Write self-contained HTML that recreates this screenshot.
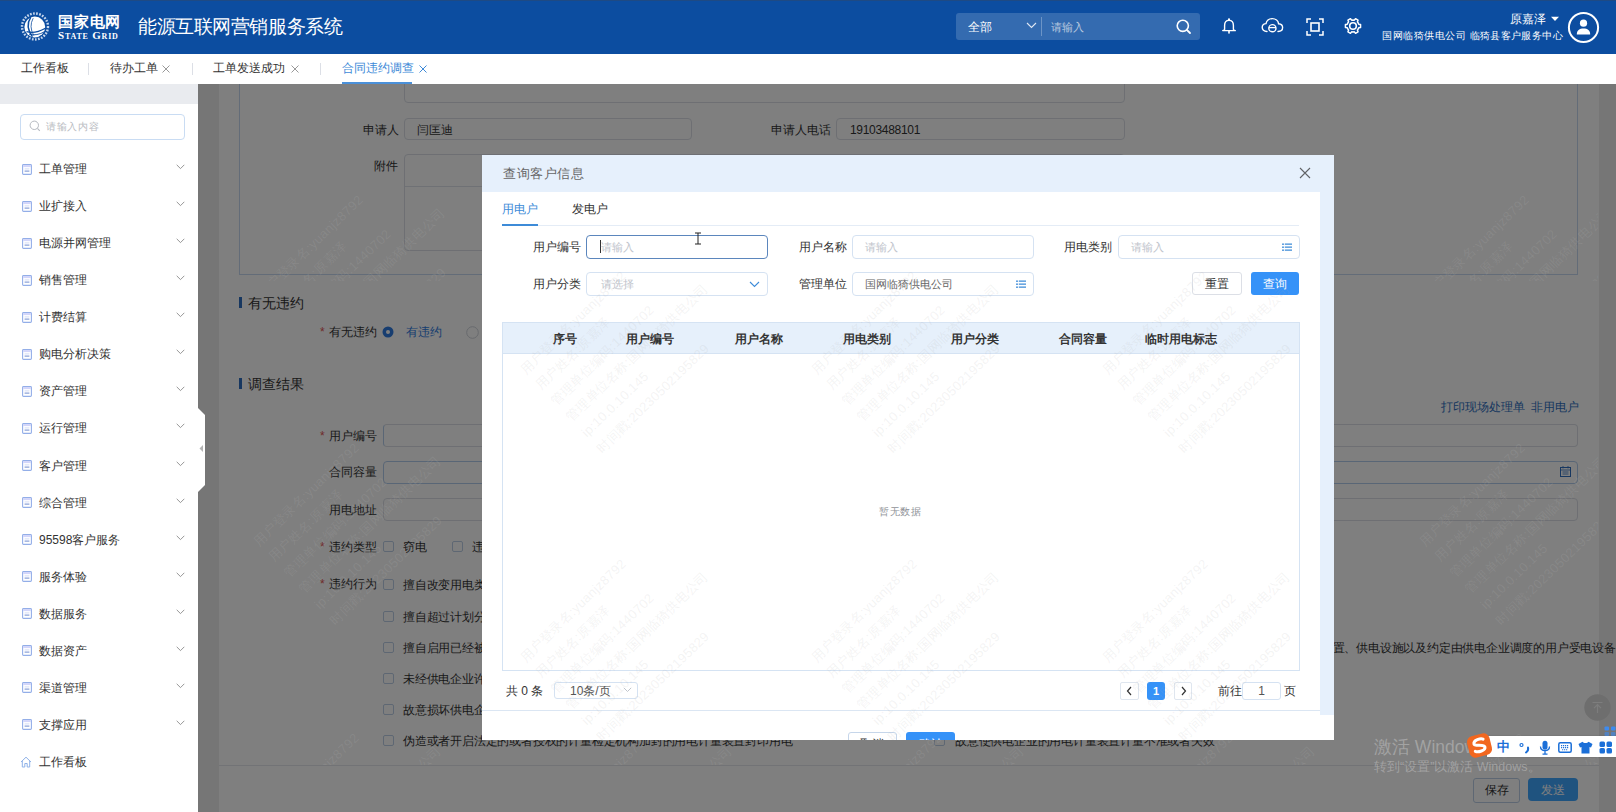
<!DOCTYPE html>
<html><head><meta charset="utf-8">
<style>
*{box-sizing:border-box;margin:0;padding:0}
html,body{width:1616px;height:812px;overflow:hidden;background:#fff;font-family:"Liberation Sans",sans-serif;position:relative}
.a{position:absolute}
.t{position:absolute;white-space:nowrap;line-height:20px}
#hdr{left:0;top:0;width:1616px;height:54px;background:#0c4da0}
#tabs{left:0;top:54px;width:1616px;height:30px;background:#fff}
#side{left:0;top:84px;width:198px;height:728px;background:#fff}
#content{left:198px;top:84px;width:1418px;height:728px;background:#ededed;overflow:hidden}
#overlay{left:198px;top:84px;width:1418px;height:728px;background:rgba(0,0,0,0.5)}
#modal{left:482px;top:155px;width:852px;height:585px;background:#fff;overflow:hidden}
</style></head><body>
<div id="hdr" class="a">
<div class="a" style="left:0px;top:0px;width:1616px;height:1px;background:#1e4a84"></div>
<svg class="a" style="left:20px;top:11px;" width="31" height="31" viewBox="0 0 31 31"><circle cx="15" cy="15.5" r="13" fill="none" stroke="#e6eefa" stroke-width="2.4" stroke-dasharray="1.7 1.4" opacity="0.85"/>
<circle cx="14.8" cy="16" r="10.4" fill="#fff"/>
<path d="M10.8 6.2 Q4.8 15.5 12.4 25.8" fill="none" stroke="#0c4da0" stroke-width="1.5"/>
<path d="M13.2 7.2 Q8.6 15.5 13.8 24.6" fill="none" stroke="#0c4da0" stroke-width="0.8"/>
<path d="M6.5 20.6 Q15 23.2 25.4 17.2" fill="none" stroke="#0c4da0" stroke-width="1.3"/>
<path d="M9 23.2 Q17 25.2 24.6 20.6" fill="none" stroke="#0c4da0" stroke-width="0.9"/></svg>
<div class="t" style="left:58px;top:12.0px;line-height:20px;font-size:15px;color:#fff;font-weight:bold;letter-spacing:0.8px">国家电网</div>
<div class="t" style="left:58px;top:27.5px;line-height:14px;font-size:11px;color:#fff;font-family:'Liberation Serif',serif;font-weight:bold;font-variant:small-caps;letter-spacing:0.8px">State Grid</div>
<div class="t" style="left:138px;top:14.5px;line-height:24px;font-size:19px;color:#fff;letter-spacing:-0.42px">能源互联网营销服务系统</div>
<div class="a" style="left:956px;top:13px;width:244px;height:27px;background:rgba(255,255,255,0.17);border-radius:3px"></div>
<div class="t" style="left:968px;top:17.0px;line-height:20px;font-size:12px;color:#fff;">全部</div>
<svg class="a" style="left:1026px;top:22px;" width="11" height="7" viewBox="0 0 11 7"><path d="M1 1 L5.5 5.5 L10 1" fill="none" stroke="#dfe7f3" stroke-width="1.1"/></svg>
<div class="a" style="left:1041px;top:17px;width:1px;height:19px;background:rgba(255,255,255,0.28)"></div>
<div class="t" style="left:1051px;top:17.0px;line-height:20px;font-size:11px;color:#b8c8df;">请输入</div>
<svg class="a" style="left:1175px;top:18px;" width="17" height="17" viewBox="0 0 17 17"><circle cx="7.8" cy="7.8" r="5.6" fill="none" stroke="#fff" stroke-width="1.6"/><path d="M11.8 11.8 L15 15" stroke="#fff" stroke-width="1.8" stroke-linecap="round"/></svg>
<svg class="a" style="left:1220px;top:17px;" width="18" height="18" viewBox="0 0 18 18"><path d="M4.6 12.6 V8.4 C4.6 5.4 6.5 3.4 9 3.4 C11.5 3.4 13.4 5.4 13.4 8.4 V12.6 C13.4 13 14.5 13.4 15.3 13.6 L2.7 13.6 C3.5 13.4 4.6 13 4.6 12.6 Z" fill="none" stroke="#fff" stroke-width="1.4" stroke-linejoin="round"/><circle cx="9" cy="2.4" r="1.1" fill="#fff"/><path d="M9 14.5 V16" stroke="#fff" stroke-width="1.6" stroke-linecap="round"/></svg>
<svg class="a" style="left:1261px;top:17px;" width="23" height="17" viewBox="0 0 23 17"><path d="M6 14.5 C2.8 14.5 1.2 12.5 1.2 10.3 C1.2 8 3 6.6 5 6.6 C5.6 3.6 8 1.6 11.3 1.6 C14.6 1.6 17.2 3.8 17.6 6.8 C19.8 7 21.6 8.5 21.6 10.6 C21.6 12.8 20 14.5 17 14.5" fill="none" stroke="#fff" stroke-width="1.4" stroke-linecap="round"/><circle cx="11.4" cy="11.2" r="3.6" fill="none" stroke="#fff" stroke-width="1.4"/><path d="M7.8 10.6 L15 10.6" stroke="#fff" stroke-width="1.3"/></svg>
<svg class="a" style="left:1306px;top:18px;" width="18" height="18" viewBox="0 0 18 18"><path d="M1 5 L1 1 L5 1 M13 1 L17 1 L17 5 M17 13 L17 17 L13 17 M5 17 L1 17 L1 13" fill="none" stroke="#fff" stroke-width="1.5"/><rect x="5" y="5" width="8" height="8" fill="none" stroke="#fff" stroke-width="1.6"/></svg>
<svg class="a" style="left:1344px;top:17px;" width="18" height="18" viewBox="0 0 18 18"><path d="M14.20 6.00 L14.74 7.25 L16.56 7.53 L16.56 10.47 L14.74 10.75 L14.20 12.00 L13.39 13.09 L14.05 14.81 L11.51 16.28 L10.35 14.85 L9.00 15.00 L7.65 14.85 L6.49 16.28 L3.95 14.81 L4.61 13.09 L3.80 12.00 L3.26 10.75 L1.44 10.47 L1.44 7.53 L3.26 7.25 L3.80 6.00 L4.61 4.91 L3.95 3.19 L6.49 1.72 L7.65 3.15 L9.00 3.00 L10.35 3.15 L11.51 1.72 L14.05 3.19 L13.39 4.91 Z" fill="none" stroke="#fff" stroke-width="1.5" stroke-linejoin="round"/><circle cx="9" cy="9" r="3.3" fill="none" stroke="#fff" stroke-width="1.6"/></svg>
<div class="t" style="left:1510px;top:8.5px;line-height:20px;font-size:12px;color:#fff;">原嘉泽</div>
<svg class="a" style="left:1550px;top:16px;" width="10" height="6" viewBox="0 0 10 6"><path d="M1 0.8 L9 0.8 L5 5 Z" fill="#fff"/></svg>
<div class="t" style="left:1382px;top:26.0px;line-height:20px;font-size:10px;color:#fff;letter-spacing:0.57px">国网临猗供电公司</div>
<div class="t" style="left:1469.5px;top:26.0px;line-height:20px;font-size:10px;color:#fff;letter-spacing:0.4px">临猗县客户服务中心</div>
<svg class="a" style="left:1567px;top:11px;" width="33" height="33" viewBox="0 0 33 33"><circle cx="16.5" cy="16.5" r="14.6" fill="none" stroke="#fff" stroke-width="2"/><circle cx="16.5" cy="12.2" r="3.6" fill="#fff"/><path d="M9.8 23.5 C9.8 19.2 12.5 17.4 16.5 17.4 C20.5 17.4 23.2 19.2 23.2 23.5 Z" fill="#fff"/></svg>
</div>
<div id="tabs" class="a">
<div class="t" style="left:21px;top:4.0px;line-height:20px;font-size:12px;color:#333;">工作看板</div>
<div class="a" style="left:88px;top:9px;width:1px;height:12px;background:#dcdfe6"></div>
<div class="t" style="left:109.5px;top:4.0px;line-height:20px;font-size:12px;color:#333;">待办工单</div>
<svg class="a" style="left:161px;top:10px;" width="10" height="10" viewBox="0 0 10 10"><path d="M1.5 1.5 L8.5 8.5 M8.5 1.5 L1.5 8.5" stroke="#999" stroke-width="1"/></svg>
<div class="a" style="left:192px;top:9px;width:1px;height:12px;background:#dcdfe6"></div>
<div class="t" style="left:213px;top:4.0px;line-height:20px;font-size:12px;color:#333;">工单发送成功</div>
<svg class="a" style="left:290px;top:10px;" width="10" height="10" viewBox="0 0 10 10"><path d="M1.5 1.5 L8.5 8.5 M8.5 1.5 L1.5 8.5" stroke="#999" stroke-width="1"/></svg>
<div class="a" style="left:320px;top:9px;width:1px;height:12px;background:#dcdfe6"></div>
<div class="t" style="left:342px;top:4.0px;line-height:20px;font-size:12px;color:#3e8ad8;">合同违约调查</div>
<svg class="a" style="left:418px;top:10px;" width="10" height="10" viewBox="0 0 10 10"><path d="M1.5 1.5 L8.5 8.5 M8.5 1.5 L1.5 8.5" stroke="#3e8ad8" stroke-width="1"/></svg>
<div class="a" style="left:342px;top:28px;width:70px;height:2px;background:#4a90d9"></div>
</div>
<div id="side" class="a">
<div class="a" style="left:0px;top:0px;width:198px;height:20px;background:#e9ebef"></div>
<div class="a" style="left:20px;top:30px;width:165px;height:26px;border:1px solid #c9dcf3;border-radius:4px;background:#fff"></div>
<svg class="a" style="left:29px;top:36px;" width="12" height="12" viewBox="0 0 12 12"><circle cx="5.3" cy="5.3" r="4.2" fill="none" stroke="#b5b9c0" stroke-width="1"/><path d="M8.4 8.4 L10.8 10.8" stroke="#b5b9c0" stroke-width="1.1"/></svg>
<div class="t" style="left:46px;top:32.5px;line-height:20px;font-size:10px;color:#b9bcc2;letter-spacing:0.7px">请输入内容</div>
<svg class="a" style="left:21.5px;top:79.5px;" width="10" height="11" viewBox="0 0 10 11"><rect x="0.6" y="0.6" width="8.8" height="9.8" rx="0.9" fill="#fff" stroke="#93aee8" stroke-width="1.1"/><rect x="1.2" y="1.1" width="7.6" height="2" fill="#d2d5fa"/><path d="M2.6 4.9 H7.4" stroke="#c9d3f2" stroke-width="0.8"/><path d="M2.6 7.1 H7.4" stroke="#6f8bcf" stroke-width="1"/></svg>
<div class="t" style="left:39px;top:75.0px;line-height:20px;font-size:12px;color:#333;">工单管理</div>
<svg class="a" style="left:176px;top:80px;" width="9" height="6" viewBox="0 0 9 6"><path d="M0.7 0.8 L4.5 4.6 L8.3 0.8" fill="none" stroke="#8a8a8a" stroke-width="0.9"/></svg>
<svg class="a" style="left:21.5px;top:116.6px;" width="10" height="11" viewBox="0 0 10 11"><rect x="0.6" y="0.6" width="8.8" height="9.8" rx="0.9" fill="#fff" stroke="#93aee8" stroke-width="1.1"/><rect x="1.2" y="1.1" width="7.6" height="2" fill="#d2d5fa"/><path d="M2.6 4.9 H7.4" stroke="#c9d3f2" stroke-width="0.8"/><path d="M2.6 7.1 H7.4" stroke="#6f8bcf" stroke-width="1"/></svg>
<div class="t" style="left:39px;top:112.1px;line-height:20px;font-size:12px;color:#333;">业扩接入</div>
<svg class="a" style="left:176px;top:117.1px;" width="9" height="6" viewBox="0 0 9 6"><path d="M0.7 0.8 L4.5 4.6 L8.3 0.8" fill="none" stroke="#8a8a8a" stroke-width="0.9"/></svg>
<svg class="a" style="left:21.5px;top:153.6px;" width="10" height="11" viewBox="0 0 10 11"><rect x="0.6" y="0.6" width="8.8" height="9.8" rx="0.9" fill="#fff" stroke="#93aee8" stroke-width="1.1"/><rect x="1.2" y="1.1" width="7.6" height="2" fill="#d2d5fa"/><path d="M2.6 4.9 H7.4" stroke="#c9d3f2" stroke-width="0.8"/><path d="M2.6 7.1 H7.4" stroke="#6f8bcf" stroke-width="1"/></svg>
<div class="t" style="left:39px;top:149.1px;line-height:20px;font-size:12px;color:#333;">电源并网管理</div>
<svg class="a" style="left:176px;top:154.1px;" width="9" height="6" viewBox="0 0 9 6"><path d="M0.7 0.8 L4.5 4.6 L8.3 0.8" fill="none" stroke="#8a8a8a" stroke-width="0.9"/></svg>
<svg class="a" style="left:21.5px;top:190.7px;" width="10" height="11" viewBox="0 0 10 11"><rect x="0.6" y="0.6" width="8.8" height="9.8" rx="0.9" fill="#fff" stroke="#93aee8" stroke-width="1.1"/><rect x="1.2" y="1.1" width="7.6" height="2" fill="#d2d5fa"/><path d="M2.6 4.9 H7.4" stroke="#c9d3f2" stroke-width="0.8"/><path d="M2.6 7.1 H7.4" stroke="#6f8bcf" stroke-width="1"/></svg>
<div class="t" style="left:39px;top:186.2px;line-height:20px;font-size:12px;color:#333;">销售管理</div>
<svg class="a" style="left:176px;top:191.2px;" width="9" height="6" viewBox="0 0 9 6"><path d="M0.7 0.8 L4.5 4.6 L8.3 0.8" fill="none" stroke="#8a8a8a" stroke-width="0.9"/></svg>
<svg class="a" style="left:21.5px;top:227.7px;" width="10" height="11" viewBox="0 0 10 11"><rect x="0.6" y="0.6" width="8.8" height="9.8" rx="0.9" fill="#fff" stroke="#93aee8" stroke-width="1.1"/><rect x="1.2" y="1.1" width="7.6" height="2" fill="#d2d5fa"/><path d="M2.6 4.9 H7.4" stroke="#c9d3f2" stroke-width="0.8"/><path d="M2.6 7.1 H7.4" stroke="#6f8bcf" stroke-width="1"/></svg>
<div class="t" style="left:39px;top:223.2px;line-height:20px;font-size:12px;color:#333;">计费结算</div>
<svg class="a" style="left:176px;top:228.2px;" width="9" height="6" viewBox="0 0 9 6"><path d="M0.7 0.8 L4.5 4.6 L8.3 0.8" fill="none" stroke="#8a8a8a" stroke-width="0.9"/></svg>
<svg class="a" style="left:21.5px;top:264.8px;" width="10" height="11" viewBox="0 0 10 11"><rect x="0.6" y="0.6" width="8.8" height="9.8" rx="0.9" fill="#fff" stroke="#93aee8" stroke-width="1.1"/><rect x="1.2" y="1.1" width="7.6" height="2" fill="#d2d5fa"/><path d="M2.6 4.9 H7.4" stroke="#c9d3f2" stroke-width="0.8"/><path d="M2.6 7.1 H7.4" stroke="#6f8bcf" stroke-width="1"/></svg>
<div class="t" style="left:39px;top:260.3px;line-height:20px;font-size:12px;color:#333;">购电分析决策</div>
<svg class="a" style="left:176px;top:265.3px;" width="9" height="6" viewBox="0 0 9 6"><path d="M0.7 0.8 L4.5 4.6 L8.3 0.8" fill="none" stroke="#8a8a8a" stroke-width="0.9"/></svg>
<svg class="a" style="left:21.5px;top:301.9px;" width="10" height="11" viewBox="0 0 10 11"><rect x="0.6" y="0.6" width="8.8" height="9.8" rx="0.9" fill="#fff" stroke="#93aee8" stroke-width="1.1"/><rect x="1.2" y="1.1" width="7.6" height="2" fill="#d2d5fa"/><path d="M2.6 4.9 H7.4" stroke="#c9d3f2" stroke-width="0.8"/><path d="M2.6 7.1 H7.4" stroke="#6f8bcf" stroke-width="1"/></svg>
<div class="t" style="left:39px;top:297.4px;line-height:20px;font-size:12px;color:#333;">资产管理</div>
<svg class="a" style="left:176px;top:302.4px;" width="9" height="6" viewBox="0 0 9 6"><path d="M0.7 0.8 L4.5 4.6 L8.3 0.8" fill="none" stroke="#8a8a8a" stroke-width="0.9"/></svg>
<svg class="a" style="left:21.5px;top:338.9px;" width="10" height="11" viewBox="0 0 10 11"><rect x="0.6" y="0.6" width="8.8" height="9.8" rx="0.9" fill="#fff" stroke="#93aee8" stroke-width="1.1"/><rect x="1.2" y="1.1" width="7.6" height="2" fill="#d2d5fa"/><path d="M2.6 4.9 H7.4" stroke="#c9d3f2" stroke-width="0.8"/><path d="M2.6 7.1 H7.4" stroke="#6f8bcf" stroke-width="1"/></svg>
<div class="t" style="left:39px;top:334.4px;line-height:20px;font-size:12px;color:#333;">运行管理</div>
<svg class="a" style="left:176px;top:339.4px;" width="9" height="6" viewBox="0 0 9 6"><path d="M0.7 0.8 L4.5 4.6 L8.3 0.8" fill="none" stroke="#8a8a8a" stroke-width="0.9"/></svg>
<svg class="a" style="left:21.5px;top:376px;" width="10" height="11" viewBox="0 0 10 11"><rect x="0.6" y="0.6" width="8.8" height="9.8" rx="0.9" fill="#fff" stroke="#93aee8" stroke-width="1.1"/><rect x="1.2" y="1.1" width="7.6" height="2" fill="#d2d5fa"/><path d="M2.6 4.9 H7.4" stroke="#c9d3f2" stroke-width="0.8"/><path d="M2.6 7.1 H7.4" stroke="#6f8bcf" stroke-width="1"/></svg>
<div class="t" style="left:39px;top:371.5px;line-height:20px;font-size:12px;color:#333;">客户管理</div>
<svg class="a" style="left:176px;top:376.5px;" width="9" height="6" viewBox="0 0 9 6"><path d="M0.7 0.8 L4.5 4.6 L8.3 0.8" fill="none" stroke="#8a8a8a" stroke-width="0.9"/></svg>
<svg class="a" style="left:21.5px;top:413px;" width="10" height="11" viewBox="0 0 10 11"><rect x="0.6" y="0.6" width="8.8" height="9.8" rx="0.9" fill="#fff" stroke="#93aee8" stroke-width="1.1"/><rect x="1.2" y="1.1" width="7.6" height="2" fill="#d2d5fa"/><path d="M2.6 4.9 H7.4" stroke="#c9d3f2" stroke-width="0.8"/><path d="M2.6 7.1 H7.4" stroke="#6f8bcf" stroke-width="1"/></svg>
<div class="t" style="left:39px;top:408.5px;line-height:20px;font-size:12px;color:#333;">综合管理</div>
<svg class="a" style="left:176px;top:413.5px;" width="9" height="6" viewBox="0 0 9 6"><path d="M0.7 0.8 L4.5 4.6 L8.3 0.8" fill="none" stroke="#8a8a8a" stroke-width="0.9"/></svg>
<svg class="a" style="left:21.5px;top:450.1px;" width="10" height="11" viewBox="0 0 10 11"><rect x="0.6" y="0.6" width="8.8" height="9.8" rx="0.9" fill="#fff" stroke="#93aee8" stroke-width="1.1"/><rect x="1.2" y="1.1" width="7.6" height="2" fill="#d2d5fa"/><path d="M2.6 4.9 H7.4" stroke="#c9d3f2" stroke-width="0.8"/><path d="M2.6 7.1 H7.4" stroke="#6f8bcf" stroke-width="1"/></svg>
<div class="t" style="left:39px;top:445.6px;line-height:20px;font-size:12px;color:#333;">95598客户服务</div>
<svg class="a" style="left:176px;top:450.6px;" width="9" height="6" viewBox="0 0 9 6"><path d="M0.7 0.8 L4.5 4.6 L8.3 0.8" fill="none" stroke="#8a8a8a" stroke-width="0.9"/></svg>
<svg class="a" style="left:21.5px;top:487.2px;" width="10" height="11" viewBox="0 0 10 11"><rect x="0.6" y="0.6" width="8.8" height="9.8" rx="0.9" fill="#fff" stroke="#93aee8" stroke-width="1.1"/><rect x="1.2" y="1.1" width="7.6" height="2" fill="#d2d5fa"/><path d="M2.6 4.9 H7.4" stroke="#c9d3f2" stroke-width="0.8"/><path d="M2.6 7.1 H7.4" stroke="#6f8bcf" stroke-width="1"/></svg>
<div class="t" style="left:39px;top:482.7px;line-height:20px;font-size:12px;color:#333;">服务体验</div>
<svg class="a" style="left:176px;top:487.7px;" width="9" height="6" viewBox="0 0 9 6"><path d="M0.7 0.8 L4.5 4.6 L8.3 0.8" fill="none" stroke="#8a8a8a" stroke-width="0.9"/></svg>
<svg class="a" style="left:21.5px;top:524.2px;" width="10" height="11" viewBox="0 0 10 11"><rect x="0.6" y="0.6" width="8.8" height="9.8" rx="0.9" fill="#fff" stroke="#93aee8" stroke-width="1.1"/><rect x="1.2" y="1.1" width="7.6" height="2" fill="#d2d5fa"/><path d="M2.6 4.9 H7.4" stroke="#c9d3f2" stroke-width="0.8"/><path d="M2.6 7.1 H7.4" stroke="#6f8bcf" stroke-width="1"/></svg>
<div class="t" style="left:39px;top:519.7px;line-height:20px;font-size:12px;color:#333;">数据服务</div>
<svg class="a" style="left:176px;top:524.7px;" width="9" height="6" viewBox="0 0 9 6"><path d="M0.7 0.8 L4.5 4.6 L8.3 0.8" fill="none" stroke="#8a8a8a" stroke-width="0.9"/></svg>
<svg class="a" style="left:21.5px;top:561.3px;" width="10" height="11" viewBox="0 0 10 11"><rect x="0.6" y="0.6" width="8.8" height="9.8" rx="0.9" fill="#fff" stroke="#93aee8" stroke-width="1.1"/><rect x="1.2" y="1.1" width="7.6" height="2" fill="#d2d5fa"/><path d="M2.6 4.9 H7.4" stroke="#c9d3f2" stroke-width="0.8"/><path d="M2.6 7.1 H7.4" stroke="#6f8bcf" stroke-width="1"/></svg>
<div class="t" style="left:39px;top:556.8px;line-height:20px;font-size:12px;color:#333;">数据资产</div>
<svg class="a" style="left:176px;top:561.8px;" width="9" height="6" viewBox="0 0 9 6"><path d="M0.7 0.8 L4.5 4.6 L8.3 0.8" fill="none" stroke="#8a8a8a" stroke-width="0.9"/></svg>
<svg class="a" style="left:21.5px;top:598.3px;" width="10" height="11" viewBox="0 0 10 11"><rect x="0.6" y="0.6" width="8.8" height="9.8" rx="0.9" fill="#fff" stroke="#93aee8" stroke-width="1.1"/><rect x="1.2" y="1.1" width="7.6" height="2" fill="#d2d5fa"/><path d="M2.6 4.9 H7.4" stroke="#c9d3f2" stroke-width="0.8"/><path d="M2.6 7.1 H7.4" stroke="#6f8bcf" stroke-width="1"/></svg>
<div class="t" style="left:39px;top:593.8px;line-height:20px;font-size:12px;color:#333;">渠道管理</div>
<svg class="a" style="left:176px;top:598.8px;" width="9" height="6" viewBox="0 0 9 6"><path d="M0.7 0.8 L4.5 4.6 L8.3 0.8" fill="none" stroke="#8a8a8a" stroke-width="0.9"/></svg>
<svg class="a" style="left:21.5px;top:635.4px;" width="10" height="11" viewBox="0 0 10 11"><rect x="0.6" y="0.6" width="8.8" height="9.8" rx="0.9" fill="#fff" stroke="#93aee8" stroke-width="1.1"/><rect x="1.2" y="1.1" width="7.6" height="2" fill="#d2d5fa"/><path d="M2.6 4.9 H7.4" stroke="#c9d3f2" stroke-width="0.8"/><path d="M2.6 7.1 H7.4" stroke="#6f8bcf" stroke-width="1"/></svg>
<div class="t" style="left:39px;top:630.9px;line-height:20px;font-size:12px;color:#333;">支撑应用</div>
<svg class="a" style="left:176px;top:635.9px;" width="9" height="6" viewBox="0 0 9 6"><path d="M0.7 0.8 L4.5 4.6 L8.3 0.8" fill="none" stroke="#8a8a8a" stroke-width="0.9"/></svg>
<svg class="a" style="left:20px;top:672px;" width="12" height="12" viewBox="0 0 12 12"><path d="M1 6 L6 1.2 L11 6 M2.3 4.8 V11 H4.8 V7.5 H7.2 V11 H9.7 V4.8" fill="none" stroke="#8fb2e8" stroke-width="1"/></svg>
<div class="t" style="left:39px;top:668.0px;line-height:20px;font-size:12px;color:#333;">工作看板</div>
</div>
<div id="content" class="a">
<div class="a" style="left:21px;top:0px;width:1380px;height:681px;background:#fff"></div>
<div class="a" style="left:21px;top:681px;width:1380px;height:47px;background:#fff;border-top:1px solid #e4e7ed"></div>
<div class="a" style="left:1275px;top:694px;width:47px;height:25px;border:1px solid #bccfe6;border-radius:3px;background:#fff"></div>
<div class="t" style="left:1287px;top:695.5px;line-height:20px;font-size:12px;color:#333;">保存</div>
<div class="a" style="left:1330px;top:694px;width:50px;height:23px;background:#3ea6ff;border-radius:4px"></div>
<div class="t" style="left:1343px;top:695.5px;line-height:20px;font-size:12px;color:#fff;">发送</div>
<div class="a" style="left:41px;top:-44px;width:1339px;height:235px;border:1px solid #c6d9f0"></div>
<div class="a" style="left:206px;top:-4px;width:721px;height:23px;border:1px solid #dcdfe6;border-radius:4px;background:#fff"></div>
<div class="t" style="left:164.5px;top:35.5px;line-height:20px;font-size:12px;color:#333;">申请人</div>
<div class="a" style="left:206px;top:34px;width:288px;height:22px;border:1px solid #dcdfe6;border-radius:4px;background:#fff"></div>
<div class="t" style="left:219px;top:35.5px;line-height:20px;font-size:12px;color:#333;">闫匡迪</div>
<div class="t" style="left:573px;top:35.5px;line-height:20px;font-size:12px;color:#333;">申请人电话</div>
<div class="a" style="left:638px;top:34px;width:289px;height:22px;border:1px solid #dcdfe6;border-radius:4px;background:#fff"></div>
<div class="t" style="left:652px;top:35.5px;line-height:20px;font-size:12px;color:#333;letter-spacing:-0.3px">19103488101</div>
<div class="t" style="left:176px;top:72.0px;line-height:20px;font-size:12px;color:#333;">附件</div>
<div class="a" style="left:206px;top:70px;width:721px;height:97px;border:1px solid #dcdfe6;border-radius:4px;background:#fff"></div>
<div class="a" style="left:207px;top:102px;width:719px;height:1px;background:#dfe3ea"></div>
<div class="a" style="left:41px;top:213px;width:3px;height:11px;background:#2f6fc0"></div>
<div class="t" style="left:50px;top:209.0px;line-height:20px;font-size:14px;color:#333;">有无违约</div>
<div class="t" style="left:122px;top:237.5px;line-height:20px;font-size:12px;color:#e05555;">*</div>
<div class="t" style="left:130.5px;top:237.5px;line-height:20px;font-size:12px;color:#333;">有无违约</div>
<svg class="a" style="left:184px;top:242px;" width="12" height="12" viewBox="0 0 12 12"><circle cx="6" cy="6" r="5.5" fill="#2f7be0"/><circle cx="6" cy="6" r="2" fill="#fff"/></svg>
<div class="t" style="left:208px;top:237.5px;line-height:20px;font-size:12px;color:#2f7be0;">有违约</div>
<svg class="a" style="left:268px;top:242px;" width="13" height="13" viewBox="0 0 13 13"><circle cx="6.5" cy="6.5" r="5.8" fill="#fff" stroke="#cfd3da" stroke-width="1"/></svg>
<div class="t" style="left:288px;top:237.5px;line-height:20px;font-size:12px;color:#333;">无违约</div>
<div class="a" style="left:41px;top:294px;width:3px;height:11px;background:#2f6fc0"></div>
<div class="t" style="left:50px;top:290.0px;line-height:20px;font-size:14px;color:#333;">调查结果</div>
<div class="t" style="left:1242.5px;top:312.5px;line-height:20px;font-size:12px;color:#2f6fc0;">打印现场处理单&nbsp;&nbsp;非用电户</div>
<div class="t" style="left:122px;top:342.0px;line-height:20px;font-size:12px;color:#e05555;">*</div>
<div class="t" style="left:130.5px;top:342.0px;line-height:20px;font-size:12px;color:#333;">用户编号</div>
<div class="a" style="left:185px;top:340px;width:1195px;height:23px;border:1px solid #dcdfe6;border-left-color:#b5cdea;border-radius:4px;background:#fff"></div>
<div class="t" style="left:130.5px;top:378.0px;line-height:20px;font-size:12px;color:#333;">合同容量</div>
<div class="a" style="left:185px;top:377px;width:1195px;height:23px;border:1px solid #b3cdec;border-radius:4px;background:#fff"></div>
<svg class="a" style="left:1362px;top:382px;" width="11" height="11" viewBox="0 0 11 11"><rect x="0.5" y="1.5" width="10" height="9" fill="none" stroke="#2f6fc0" stroke-width="1"/><path d="M0.5 4 H10.5 M3 0 V2.5 M8 0 V2.5 M2.5 6 H8.5 M2.5 8 H8.5" stroke="#2f6fc0" stroke-width="0.8"/></svg>
<div class="t" style="left:130.5px;top:415.5px;line-height:20px;font-size:12px;color:#333;">用电地址</div>
<div class="a" style="left:185px;top:414px;width:1195px;height:23px;border:1px solid #dcdfe6;border-radius:4px;background:#fff"></div>
<div class="t" style="left:122px;top:453.0px;line-height:20px;font-size:12px;color:#e05555;">*</div>
<div class="t" style="left:130.5px;top:453.0px;line-height:20px;font-size:12px;color:#333;">违约类型</div>
<div class="a" style="left:185px;top:457px;width:11px;height:11px;border:1px solid #bccfe6;border-radius:2px;background:#fff"></div>
<div class="t" style="left:205px;top:453.0px;line-height:20px;font-size:12px;color:#333;">窃电</div>
<div class="a" style="left:254px;top:457px;width:11px;height:11px;border:1px solid #bccfe6;border-radius:2px;background:#fff"></div>
<div class="t" style="left:274px;top:453.0px;line-height:20px;font-size:12px;color:#333;">违约用电</div>
<div class="t" style="left:122px;top:490.0px;line-height:20px;font-size:12px;color:#e05555;">*</div>
<div class="t" style="left:130.5px;top:490.0px;line-height:20px;font-size:12px;color:#333;">违约行为</div>
<div class="a" style="left:185px;top:495px;width:11px;height:11px;border:1px solid #bccfe6;border-radius:2px;background:#fff"></div>
<div class="t" style="left:205px;top:491.0px;line-height:20px;font-size:12px;color:#333;letter-spacing:-0.2px">擅自改变用电类别</div>
<div class="a" style="left:736px;top:495px;width:11px;height:11px;border:1px solid #bccfe6;border-radius:2px;background:#fff"></div>
<div class="t" style="left:757px;top:491.0px;line-height:20px;font-size:12px;color:#333;letter-spacing:-0.2px">擅自超过合同约定的容量用电</div>
<div class="a" style="left:185px;top:527px;width:11px;height:11px;border:1px solid #bccfe6;border-radius:2px;background:#fff"></div>
<div class="t" style="left:205px;top:522.5px;line-height:20px;font-size:12px;color:#333;letter-spacing:-0.2px">擅自超过计划分配的用电指标的</div>
<div class="a" style="left:736px;top:527px;width:11px;height:11px;border:1px solid #bccfe6;border-radius:2px;background:#fff"></div>
<div class="t" style="left:757px;top:522.5px;line-height:20px;font-size:12px;color:#333;letter-spacing:-0.2px">擅自使用已在供电企业办理暂停手续的电力设备</div>
<div class="a" style="left:185px;top:558px;width:11px;height:11px;border:1px solid #bccfe6;border-radius:2px;background:#fff"></div>
<div class="t" style="left:205px;top:553.5px;line-height:20px;font-size:12px;color:#333;letter-spacing:-0.2px">擅自启用已经被供电企业查封的电力设备</div>
<div class="a" style="left:736px;top:558px;width:11px;height:11px;border:1px solid #bccfe6;border-radius:2px;background:#fff"></div>
<div class="t" style="left:757px;top:553.5px;line-height:20px;font-size:12px;color:#333;letter-spacing:-0.2px">擅自迁移、更动或者擅自操作供电企业的用电计量装置、电力负荷控制装置、供电设施以及约定由供电企业调度的用户受电设备</div>
<div class="a" style="left:185px;top:589px;width:11px;height:11px;border:1px solid #bccfe6;border-radius:2px;background:#fff"></div>
<div class="t" style="left:205px;top:584.5px;line-height:20px;font-size:12px;color:#333;letter-spacing:-0.2px">未经供电企业许可，擅自引入（供出）电源或将备用电源和其他电源私自并网</div>
<div class="a" style="left:736px;top:589px;width:11px;height:11px;border:1px solid #bccfe6;border-radius:2px;background:#fff"></div>
<div class="t" style="left:757px;top:584.5px;line-height:20px;font-size:12px;color:#333;letter-spacing:-0.2px">在供电企业的供电设施上，擅自接线用电</div>
<div class="a" style="left:185px;top:620px;width:11px;height:11px;border:1px solid #bccfe6;border-radius:2px;background:#fff"></div>
<div class="t" style="left:205px;top:616.0px;line-height:20px;font-size:12px;color:#333;letter-spacing:-0.2px">故意损坏供电企业用电计量装置</div>
<div class="a" style="left:736px;top:620px;width:11px;height:11px;border:1px solid #bccfe6;border-radius:2px;background:#fff"></div>
<div class="t" style="left:757px;top:616.0px;line-height:20px;font-size:12px;color:#333;letter-spacing:-0.2px">绕越供电企业用电计量装置用电</div>
<div class="a" style="left:185px;top:651px;width:11px;height:11px;border:1px solid #bccfe6;border-radius:2px;background:#fff"></div>
<div class="t" style="left:205px;top:647.0px;line-height:20px;font-size:12px;color:#333;letter-spacing:-0.2px">伪造或者开启法定的或者授权的计量检定机构加封的用电计量装置封印用电</div>
<div class="a" style="left:736px;top:651px;width:11px;height:11px;border:1px solid #bccfe6;border-radius:2px;background:#fff"></div>
<div class="t" style="left:757px;top:647.0px;line-height:20px;font-size:12px;color:#333;letter-spacing:-0.2px">故意使供电企业的用电计量装置计量不准或者失效</div>
<svg class="a" style="left:1386px;top:610px;" width="27" height="27" viewBox="0 0 27 27"><circle cx="13.5" cy="13.5" r="13.2" fill="#dcdcdc"/><path d="M8.5 8.5 H18.5 M13.5 19 V11 M10 14.2 L13.5 10.7 L17 14.2" fill="none" stroke="#fafafa" stroke-width="1.2"/></svg>
</div>
<div id="overlay" class="a"></div>
<div class="a" style="left:219px;top:84px;width:1379px;height:197px;overflow:hidden">
<div class="a" style="left:45px;top:199px;transform-origin:0 17px;transform:rotate(-44deg);font-size:13px;letter-spacing:0.35px;line-height:22px;white-space:nowrap;color:rgba(190,190,190,0.16);pointer-events:none">用户登录名:yuanjz8792<br>用户姓名:原嘉泽<br>管理单位编码:1440702<br>管理单位名称:国网临猗供电公司<br>ip:10.0.10.145<br>时间戳:20230502195829</div>
<div class="a" style="left:336.5px;top:199px;transform-origin:0 17px;transform:rotate(-44deg);font-size:13px;letter-spacing:0.35px;line-height:22px;white-space:nowrap;color:rgba(190,190,190,0.16);pointer-events:none">用户登录名:yuanjz8792<br>用户姓名:原嘉泽<br>管理单位编码:1440702<br>管理单位名称:国网临猗供电公司<br>ip:10.0.10.145<br>时间戳:20230502195829</div>
<div class="a" style="left:628px;top:199px;transform-origin:0 17px;transform:rotate(-44deg);font-size:13px;letter-spacing:0.35px;line-height:22px;white-space:nowrap;color:rgba(190,190,190,0.16);pointer-events:none">用户登录名:yuanjz8792<br>用户姓名:原嘉泽<br>管理单位编码:1440702<br>管理单位名称:国网临猗供电公司<br>ip:10.0.10.145<br>时间戳:20230502195829</div>
<div class="a" style="left:919.5px;top:199px;transform-origin:0 17px;transform:rotate(-44deg);font-size:13px;letter-spacing:0.35px;line-height:22px;white-space:nowrap;color:rgba(190,190,190,0.16);pointer-events:none">用户登录名:yuanjz8792<br>用户姓名:原嘉泽<br>管理单位编码:1440702<br>管理单位名称:国网临猗供电公司<br>ip:10.0.10.145<br>时间戳:20230502195829</div>
<div class="a" style="left:1211px;top:199px;transform-origin:0 17px;transform:rotate(-44deg);font-size:13px;letter-spacing:0.35px;line-height:22px;white-space:nowrap;color:rgba(190,190,190,0.16);pointer-events:none">用户登录名:yuanjz8792<br>用户姓名:原嘉泽<br>管理单位编码:1440702<br>管理单位名称:国网临猗供电公司<br>ip:10.0.10.145<br>时间戳:20230502195829</div>
</div>
<div class="a" style="left:219px;top:400px;width:1379px;height:365px;overflow:hidden">
<div class="a" style="left:40.5px;top:131px;transform-origin:0 17px;transform:rotate(-44deg);font-size:13px;letter-spacing:0.35px;line-height:22px;white-space:nowrap;color:rgba(190,190,190,0.16);pointer-events:none">用户登录名:yuanjz8792<br>用户姓名:原嘉泽<br>管理单位编码:1440702<br>管理单位名称:国网临猗供电公司<br>ip:10.0.10.145<br>时间戳:20230502195829</div>
<div class="a" style="left:40.5px;top:421px;transform-origin:0 17px;transform:rotate(-44deg);font-size:13px;letter-spacing:0.35px;line-height:22px;white-space:nowrap;color:rgba(190,190,190,0.16);pointer-events:none">用户登录名:yuanjz8792<br>用户姓名:原嘉泽<br>管理单位编码:1440702<br>管理单位名称:国网临猗供电公司<br>ip:10.0.10.145<br>时间戳:20230502195829</div>
<div class="a" style="left:332px;top:131px;transform-origin:0 17px;transform:rotate(-44deg);font-size:13px;letter-spacing:0.35px;line-height:22px;white-space:nowrap;color:rgba(190,190,190,0.16);pointer-events:none">用户登录名:yuanjz8792<br>用户姓名:原嘉泽<br>管理单位编码:1440702<br>管理单位名称:国网临猗供电公司<br>ip:10.0.10.145<br>时间戳:20230502195829</div>
<div class="a" style="left:332px;top:421px;transform-origin:0 17px;transform:rotate(-44deg);font-size:13px;letter-spacing:0.35px;line-height:22px;white-space:nowrap;color:rgba(190,190,190,0.16);pointer-events:none">用户登录名:yuanjz8792<br>用户姓名:原嘉泽<br>管理单位编码:1440702<br>管理单位名称:国网临猗供电公司<br>ip:10.0.10.145<br>时间戳:20230502195829</div>
<div class="a" style="left:623.5px;top:131px;transform-origin:0 17px;transform:rotate(-44deg);font-size:13px;letter-spacing:0.35px;line-height:22px;white-space:nowrap;color:rgba(190,190,190,0.16);pointer-events:none">用户登录名:yuanjz8792<br>用户姓名:原嘉泽<br>管理单位编码:1440702<br>管理单位名称:国网临猗供电公司<br>ip:10.0.10.145<br>时间戳:20230502195829</div>
<div class="a" style="left:623.5px;top:421px;transform-origin:0 17px;transform:rotate(-44deg);font-size:13px;letter-spacing:0.35px;line-height:22px;white-space:nowrap;color:rgba(190,190,190,0.16);pointer-events:none">用户登录名:yuanjz8792<br>用户姓名:原嘉泽<br>管理单位编码:1440702<br>管理单位名称:国网临猗供电公司<br>ip:10.0.10.145<br>时间戳:20230502195829</div>
<div class="a" style="left:915px;top:131px;transform-origin:0 17px;transform:rotate(-44deg);font-size:13px;letter-spacing:0.35px;line-height:22px;white-space:nowrap;color:rgba(190,190,190,0.16);pointer-events:none">用户登录名:yuanjz8792<br>用户姓名:原嘉泽<br>管理单位编码:1440702<br>管理单位名称:国网临猗供电公司<br>ip:10.0.10.145<br>时间戳:20230502195829</div>
<div class="a" style="left:915px;top:421px;transform-origin:0 17px;transform:rotate(-44deg);font-size:13px;letter-spacing:0.35px;line-height:22px;white-space:nowrap;color:rgba(190,190,190,0.16);pointer-events:none">用户登录名:yuanjz8792<br>用户姓名:原嘉泽<br>管理单位编码:1440702<br>管理单位名称:国网临猗供电公司<br>ip:10.0.10.145<br>时间戳:20230502195829</div>
<div class="a" style="left:1206.5px;top:131px;transform-origin:0 17px;transform:rotate(-44deg);font-size:13px;letter-spacing:0.35px;line-height:22px;white-space:nowrap;color:rgba(190,190,190,0.16);pointer-events:none">用户登录名:yuanjz8792<br>用户姓名:原嘉泽<br>管理单位编码:1440702<br>管理单位名称:国网临猗供电公司<br>ip:10.0.10.145<br>时间戳:20230502195829</div>
<div class="a" style="left:1206.5px;top:421px;transform-origin:0 17px;transform:rotate(-44deg);font-size:13px;letter-spacing:0.35px;line-height:22px;white-space:nowrap;color:rgba(190,190,190,0.16);pointer-events:none">用户登录名:yuanjz8792<br>用户姓名:原嘉泽<br>管理单位编码:1440702<br>管理单位名称:国网临猗供电公司<br>ip:10.0.10.145<br>时间戳:20230502195829</div>
</div>
<svg class="a" style="left:198px;top:408px;" width="8" height="85" viewBox="0 0 8 85"><path d="M0 0 L7 7 L7 77 L0 84 Z" fill="#fff"/><path d="M5 37 L1.5 40.5 L5 44 Z" fill="#b4b4b4"/></svg>
<div id="modal" class="a">
<div class="a" style="left:0px;top:0px;width:852px;height:37px;background:#e6f0fc"></div>
<div class="t" style="left:21px;top:9.0px;line-height:20px;font-size:13px;color:#666;letter-spacing:0.6px">查询客户信息</div>
<svg class="a" style="left:817px;top:12px;" width="12" height="12" viewBox="0 0 12 12"><path d="M1 1 L11 11 M11 1 L1 11" stroke="#606266" stroke-width="1.1"/></svg>
<div class="a" style="left:838px;top:37px;width:14px;height:523px;background:#e6f0fc"></div>
<div class="t" style="left:20px;top:44.0px;line-height:20px;font-size:12px;color:#3d8bd8;">用电户</div>
<div class="t" style="left:89.5px;top:44.0px;line-height:20px;font-size:12px;color:#333;">发电户</div>
<div class="a" style="left:20px;top:70px;width:797px;height:1px;background:#e4ecf6"></div>
<div class="a" style="left:20px;top:69px;width:36px;height:2px;background:#3d8bd8"></div>
<div class="t" style="left:50.5px;top:82.0px;line-height:20px;font-size:12px;color:#333;">用户编号</div>
<div class="a" style="left:104px;top:80px;width:182px;height:24px;border:1px solid #5b86bd;border-radius:4px;background:#fff"></div>
<div class="a" style="left:118px;top:85px;width:1px;height:13px;background:#333"></div>
<div class="t" style="left:119px;top:82.0px;line-height:20px;font-size:11px;color:#c0c4cc;">请输入</div>
<svg class="a" style="left:212px;top:77px;" width="8" height="13" viewBox="0 0 8 13"><path d="M1 1 H7 M4 1 V12 M1 12 H7" stroke="#222" stroke-width="1"/></svg>
<div class="t" style="left:316.5px;top:82.0px;line-height:20px;font-size:12px;color:#333;">用户名称</div>
<div class="a" style="left:370px;top:80px;width:182px;height:24px;border:1px solid #d5e2f2;border-radius:4px;background:#fff"></div>
<div class="t" style="left:383px;top:82.0px;line-height:20px;font-size:11px;color:#c0c4cc;">请输入</div>
<div class="t" style="left:582px;top:82.0px;line-height:20px;font-size:12px;color:#333;">用电类别</div>
<div class="a" style="left:636px;top:80px;width:182px;height:24px;border:1px solid #d5e2f2;border-radius:4px;background:#fff"></div>
<div class="t" style="left:649px;top:82.0px;line-height:20px;font-size:11px;color:#c0c4cc;">请输入</div>
<svg class="a" style="left:800px;top:88px;" width="10" height="9" viewBox="0 0 10 9"><circle cx="1" cy="1.2" r="0.9" fill="#3d8bd8"/><circle cx="1" cy="4.2" r="0.9" fill="#3d8bd8"/><circle cx="1" cy="7.2" r="0.9" fill="#3d8bd8"/><path d="M2.8 1.2 H10 M2.8 4.2 H10 M2.8 7.2 H10" stroke="#3d8bd8" stroke-width="1.3"/></svg>
<div class="t" style="left:50.5px;top:119.0px;line-height:20px;font-size:12px;color:#333;">用户分类</div>
<div class="a" style="left:104px;top:117px;width:182px;height:24px;border:1px solid #d5e2f2;border-radius:4px;background:#fff"></div>
<div class="t" style="left:119px;top:119.0px;line-height:20px;font-size:11px;color:#c0c4cc;">请选择</div>
<svg class="a" style="left:267px;top:126px;" width="11" height="7" viewBox="0 0 11 7"><path d="M1 1 L5.5 5.5 L10 1" fill="none" stroke="#3d8bd8" stroke-width="1.1"/></svg>
<div class="t" style="left:316.5px;top:119.0px;line-height:20px;font-size:12px;color:#333;">管理单位</div>
<div class="a" style="left:370px;top:117px;width:182px;height:24px;border:1px solid #d5e2f2;border-radius:4px;background:#fff"></div>
<div class="t" style="left:383px;top:119.0px;line-height:20px;font-size:11px;color:#666;">国网临猗供电公司</div>
<svg class="a" style="left:534px;top:125px;" width="10" height="9" viewBox="0 0 10 9"><circle cx="1" cy="1.2" r="0.9" fill="#3d8bd8"/><circle cx="1" cy="4.2" r="0.9" fill="#3d8bd8"/><circle cx="1" cy="7.2" r="0.9" fill="#3d8bd8"/><path d="M2.8 1.2 H10 M2.8 4.2 H10 M2.8 7.2 H10" stroke="#3d8bd8" stroke-width="1.3"/></svg>
<div class="a" style="left:710px;top:117px;width:50px;height:23px;border:1px solid #dcdfe6;border-radius:3px;background:#fff"></div>
<div class="t" style="left:723px;top:118.5px;line-height:20px;font-size:12px;color:#333;">重置</div>
<div class="a" style="left:769px;top:117px;width:48px;height:23px;background:#3592f8;border-radius:3px"></div>
<div class="t" style="left:781px;top:118.5px;line-height:20px;font-size:12px;color:#fff;">查询</div>
<div class="a" style="left:20px;top:167px;width:798px;height:349px;border:1px solid #d5e3f3"></div>
<div class="a" style="left:21px;top:168px;width:796px;height:31px;background:#e6f0fb;border-bottom:1px solid #d5e3f3"></div>
<div class="t" style="left:-17px;width:200px;text-align:center;top:173.5px;line-height:20px;font-size:12px;color:#333;font-weight:bold">序号</div>
<div class="t" style="left:68px;width:200px;text-align:center;top:173.5px;line-height:20px;font-size:12px;color:#333;font-weight:bold">用户编号</div>
<div class="t" style="left:177px;width:200px;text-align:center;top:173.5px;line-height:20px;font-size:12px;color:#333;font-weight:bold">用户名称</div>
<div class="t" style="left:284.5px;width:200px;text-align:center;top:173.5px;line-height:20px;font-size:12px;color:#333;font-weight:bold">用电类别</div>
<div class="t" style="left:392.5px;width:200px;text-align:center;top:173.5px;line-height:20px;font-size:12px;color:#333;font-weight:bold">用户分类</div>
<div class="t" style="left:500.5px;width:200px;text-align:center;top:173.5px;line-height:20px;font-size:12px;color:#333;font-weight:bold">合同容量</div>
<div class="t" style="left:598.5px;width:200px;text-align:center;top:173.5px;line-height:20px;font-size:12px;color:#333;font-weight:bold">临时用电标志</div>
<div class="t" style="left:318.5px;width:200px;text-align:center;top:347.0px;line-height:20px;font-size:10px;color:#909399;letter-spacing:0.7px">暂无数据</div>
<div class="t" style="left:24px;top:525.5px;line-height:20px;font-size:12px;color:#333;">共 0 条</div>
<div class="a" style="left:72px;top:527px;width:84px;height:17px;border:1px solid #d5e2f2;border-radius:3px;background:#fff"></div>
<div class="t" style="left:88px;top:525.5px;line-height:20px;font-size:12px;color:#555;">10条/页</div>
<svg class="a" style="left:141px;top:532px;" width="9" height="6" viewBox="0 0 9 6"><path d="M0.8 0.8 L4.5 4.5 L8.2 0.8" fill="none" stroke="#c0c4cc" stroke-width="1"/></svg>
<div class="a" style="left:638px;top:527px;width:19px;height:18px;border:1px solid #dfe6ef;border-radius:2px;background:#fff"></div>
<svg class="a" style="left:644px;top:531px;" width="7" height="10" viewBox="0 0 7 10"><path d="M5 1 L1.5 5 L5 9" fill="none" stroke="#333" stroke-width="1.2"/></svg>
<div class="a" style="left:665px;top:527px;width:18px;height:18px;background:#3592f8;border-radius:3px"></div>
<div class="t" style="left:574px;width:200px;text-align:center;top:526.0px;line-height:20px;font-size:11px;color:#fff;font-weight:bold">1</div>
<div class="a" style="left:692px;top:527px;width:18px;height:18px;border:1px solid #dfe6ef;border-radius:2px;background:#fff"></div>
<svg class="a" style="left:698px;top:531px;" width="7" height="10" viewBox="0 0 7 10"><path d="M2 1 L5.5 5 L2 9" fill="none" stroke="#333" stroke-width="1.2"/></svg>
<div class="t" style="left:735.5px;top:526.0px;line-height:20px;font-size:12px;color:#333;">前往</div>
<div class="a" style="left:760px;top:527px;width:39px;height:18px;border:1px solid #d5e2f2;border-radius:3px;background:#fff"></div>
<div class="t" style="left:679.5px;width:200px;text-align:center;top:526.0px;line-height:20px;font-size:12px;color:#555;">1</div>
<div class="t" style="left:802px;top:526.0px;line-height:20px;font-size:12px;color:#333;">页</div>
<div class="a" style="left:0px;top:555px;width:838px;height:1px;background:#dbe6f3"></div>
<div class="a" style="left:366px;top:577px;width:49px;height:28px;border:1px solid #c6d6ea;border-radius:3px;background:#fff"></div>
<div class="t" style="left:290px;width:200px;text-align:center;top:578.5px;line-height:20px;font-size:12px;color:#333;">取消</div>
<div class="a" style="left:424px;top:577px;width:49px;height:28px;background:#3592f8;border-radius:3px"></div>
<div class="t" style="left:348.5px;width:200px;text-align:center;top:578.5px;line-height:20px;font-size:12px;color:#fff;">确认</div>
<div class="a" style="left:-246px;top:204px;transform-origin:0 17px;transform:rotate(-44deg);font-size:13px;letter-spacing:0.35px;line-height:22px;white-space:nowrap;color:rgba(170,170,170,0.14);pointer-events:none">用户登录名:yuanjz8792<br>用户姓名:原嘉泽<br>管理单位编码:1440702<br>管理单位名称:国网临猗供电公司<br>ip:10.0.10.145<br>时间戳:20230502195829</div>
<div class="a" style="left:-246px;top:491.7px;transform-origin:0 17px;transform:rotate(-44deg);font-size:13px;letter-spacing:0.35px;line-height:22px;white-space:nowrap;color:rgba(170,170,170,0.14);pointer-events:none">用户登录名:yuanjz8792<br>用户姓名:原嘉泽<br>管理单位编码:1440702<br>管理单位名称:国网临猗供电公司<br>ip:10.0.10.145<br>时间戳:20230502195829</div>
<div class="a" style="left:-246px;top:779.4px;transform-origin:0 17px;transform:rotate(-44deg);font-size:13px;letter-spacing:0.35px;line-height:22px;white-space:nowrap;color:rgba(170,170,170,0.14);pointer-events:none">用户登录名:yuanjz8792<br>用户姓名:原嘉泽<br>管理单位编码:1440702<br>管理单位名称:国网临猗供电公司<br>ip:10.0.10.145<br>时间戳:20230502195829</div>
<div class="a" style="left:45px;top:204px;transform-origin:0 17px;transform:rotate(-44deg);font-size:13px;letter-spacing:0.35px;line-height:22px;white-space:nowrap;color:rgba(170,170,170,0.14);pointer-events:none">用户登录名:yuanjz8792<br>用户姓名:原嘉泽<br>管理单位编码:1440702<br>管理单位名称:国网临猗供电公司<br>ip:10.0.10.145<br>时间戳:20230502195829</div>
<div class="a" style="left:45px;top:491.7px;transform-origin:0 17px;transform:rotate(-44deg);font-size:13px;letter-spacing:0.35px;line-height:22px;white-space:nowrap;color:rgba(170,170,170,0.14);pointer-events:none">用户登录名:yuanjz8792<br>用户姓名:原嘉泽<br>管理单位编码:1440702<br>管理单位名称:国网临猗供电公司<br>ip:10.0.10.145<br>时间戳:20230502195829</div>
<div class="a" style="left:45px;top:779.4px;transform-origin:0 17px;transform:rotate(-44deg);font-size:13px;letter-spacing:0.35px;line-height:22px;white-space:nowrap;color:rgba(170,170,170,0.14);pointer-events:none">用户登录名:yuanjz8792<br>用户姓名:原嘉泽<br>管理单位编码:1440702<br>管理单位名称:国网临猗供电公司<br>ip:10.0.10.145<br>时间戳:20230502195829</div>
<div class="a" style="left:336px;top:204px;transform-origin:0 17px;transform:rotate(-44deg);font-size:13px;letter-spacing:0.35px;line-height:22px;white-space:nowrap;color:rgba(170,170,170,0.14);pointer-events:none">用户登录名:yuanjz8792<br>用户姓名:原嘉泽<br>管理单位编码:1440702<br>管理单位名称:国网临猗供电公司<br>ip:10.0.10.145<br>时间戳:20230502195829</div>
<div class="a" style="left:336px;top:491.7px;transform-origin:0 17px;transform:rotate(-44deg);font-size:13px;letter-spacing:0.35px;line-height:22px;white-space:nowrap;color:rgba(170,170,170,0.14);pointer-events:none">用户登录名:yuanjz8792<br>用户姓名:原嘉泽<br>管理单位编码:1440702<br>管理单位名称:国网临猗供电公司<br>ip:10.0.10.145<br>时间戳:20230502195829</div>
<div class="a" style="left:336px;top:779.4px;transform-origin:0 17px;transform:rotate(-44deg);font-size:13px;letter-spacing:0.35px;line-height:22px;white-space:nowrap;color:rgba(170,170,170,0.14);pointer-events:none">用户登录名:yuanjz8792<br>用户姓名:原嘉泽<br>管理单位编码:1440702<br>管理单位名称:国网临猗供电公司<br>ip:10.0.10.145<br>时间戳:20230502195829</div>
<div class="a" style="left:627px;top:204px;transform-origin:0 17px;transform:rotate(-44deg);font-size:13px;letter-spacing:0.35px;line-height:22px;white-space:nowrap;color:rgba(170,170,170,0.14);pointer-events:none">用户登录名:yuanjz8792<br>用户姓名:原嘉泽<br>管理单位编码:1440702<br>管理单位名称:国网临猗供电公司<br>ip:10.0.10.145<br>时间戳:20230502195829</div>
<div class="a" style="left:627px;top:491.7px;transform-origin:0 17px;transform:rotate(-44deg);font-size:13px;letter-spacing:0.35px;line-height:22px;white-space:nowrap;color:rgba(170,170,170,0.14);pointer-events:none">用户登录名:yuanjz8792<br>用户姓名:原嘉泽<br>管理单位编码:1440702<br>管理单位名称:国网临猗供电公司<br>ip:10.0.10.145<br>时间戳:20230502195829</div>
<div class="a" style="left:627px;top:779.4px;transform-origin:0 17px;transform:rotate(-44deg);font-size:13px;letter-spacing:0.35px;line-height:22px;white-space:nowrap;color:rgba(170,170,170,0.14);pointer-events:none">用户登录名:yuanjz8792<br>用户姓名:原嘉泽<br>管理单位编码:1440702<br>管理单位名称:国网临猗供电公司<br>ip:10.0.10.145<br>时间戳:20230502195829</div>
<div class="a" style="left:918px;top:204px;transform-origin:0 17px;transform:rotate(-44deg);font-size:13px;letter-spacing:0.35px;line-height:22px;white-space:nowrap;color:rgba(170,170,170,0.14);pointer-events:none">用户登录名:yuanjz8792<br>用户姓名:原嘉泽<br>管理单位编码:1440702<br>管理单位名称:国网临猗供电公司<br>ip:10.0.10.145<br>时间戳:20230502195829</div>
<div class="a" style="left:918px;top:491.7px;transform-origin:0 17px;transform:rotate(-44deg);font-size:13px;letter-spacing:0.35px;line-height:22px;white-space:nowrap;color:rgba(170,170,170,0.14);pointer-events:none">用户登录名:yuanjz8792<br>用户姓名:原嘉泽<br>管理单位编码:1440702<br>管理单位名称:国网临猗供电公司<br>ip:10.0.10.145<br>时间戳:20230502195829</div>
<div class="a" style="left:918px;top:779.4px;transform-origin:0 17px;transform:rotate(-44deg);font-size:13px;letter-spacing:0.35px;line-height:22px;white-space:nowrap;color:rgba(170,170,170,0.14);pointer-events:none">用户登录名:yuanjz8792<br>用户姓名:原嘉泽<br>管理单位编码:1440702<br>管理单位名称:国网临猗供电公司<br>ip:10.0.10.145<br>时间戳:20230502195829</div>
</div>
<div class="t" style="left:1374px;top:734.5px;line-height:24px;font-size:17.5px;color:rgba(255,255,255,0.28);">激活 Windows</div>
<div class="t" style="left:1374px;top:756.5px;line-height:20px;font-size:12.5px;color:rgba(255,255,255,0.28);">转到“设置”以激活 Windows。</div>
<div class="a" style="left:1487px;top:736px;width:129px;height:21px;background:#fff;box-shadow:0 0 2px rgba(0,0,0,0.15)"></div>
<svg class="a" style="left:1465px;top:731px;" width="29" height="29" viewBox="0 0 29 29"><g transform="rotate(-14 14.5 14.5)"><rect x="3" y="3.5" width="23" height="22" rx="6" fill="#f2671f"/><path d="M19.5 9.2 C17.5 7.6 9.8 7.6 9.5 11.6 C9.3 14.6 19.6 13.8 19.4 17.4 C19.2 21 11.5 21 9 19.2" fill="none" stroke="#fff" stroke-width="3" stroke-linecap="round"/></g></svg>
<div class="t" style="left:1403.5px;width:200px;text-align:center;top:737.0px;line-height:20px;font-size:12.5px;color:#1b6fd8;font-weight:bold">中</div>
<svg class="a" style="left:1519px;top:741px;" width="12" height="13" viewBox="0 0 12 13"><circle cx="2.5" cy="4" r="1.5" fill="none" stroke="#1b6fd8" stroke-width="1.2"/><path d="M9 6.5 C9.5 8.5 8.5 10.5 7 11.5" fill="none" stroke="#1b6fd8" stroke-width="2" stroke-linecap="round"/></svg>
<svg class="a" style="left:1539px;top:740px;" width="12" height="15" viewBox="0 0 12 15"><rect x="3.5" y="0.8" width="5" height="9" rx="2.5" fill="#1b6fd8"/><path d="M1.5 6.5 C1.5 12 10.5 12 10.5 6.5 M6 11 V14 M3.5 14.2 H8.5" fill="none" stroke="#1b6fd8" stroke-width="1.3"/></svg>
<svg class="a" style="left:1558px;top:742px;" width="14" height="11" viewBox="0 0 14 11"><rect x="0.8" y="0.8" width="12.4" height="9.4" rx="1.5" fill="none" stroke="#1b6fd8" stroke-width="1.5"/><path d="M3 3.6 H11 M3 5.6 H11 M4 7.8 H10" stroke="#1b6fd8" stroke-width="1.1" stroke-dasharray="1.2 0.8"/></svg>
<svg class="a" style="left:1578px;top:741px;" width="15" height="13" viewBox="0 0 15 13"><path d="M4.5 0.8 C5.5 2.5 9.5 2.5 10.5 0.8 L14.5 3 L13 6.5 L11.5 6 L11.5 12.5 L3.5 12.5 L3.5 6 L2 6.5 L0.5 3 Z" fill="#1b6fd8"/></svg>
<svg class="a" style="left:1599px;top:741px;" width="14" height="13" viewBox="0 0 14 13"><rect x="0.5" y="0.5" width="5.5" height="5.5" rx="1.5" fill="#1b6fd8"/><rect x="7.5" y="0.5" width="5.5" height="5.5" rx="1.5" fill="#1b6fd8"/><rect x="0.5" y="7" width="5.5" height="5.5" rx="1.5" fill="#1b6fd8"/><rect x="7.5" y="7" width="5.5" height="5.5" rx="1.5" fill="#1b6fd8"/></svg>
<svg class="a" style="left:1604px;top:726px;" width="12" height="10" viewBox="0 0 12 10"><rect x="0.5" y="0.5" width="4.5" height="4" rx="1" fill="#3d8bf0"/><rect x="7" y="0.5" width="4.5" height="4" rx="1" fill="#3d8bf0"/><rect x="0.5" y="6" width="4.5" height="4" rx="1" fill="#3d8bf0" opacity="0.6"/><rect x="7" y="6" width="4.5" height="4" rx="1" fill="#3d8bf0" opacity="0.6"/></svg>
</body></html>
